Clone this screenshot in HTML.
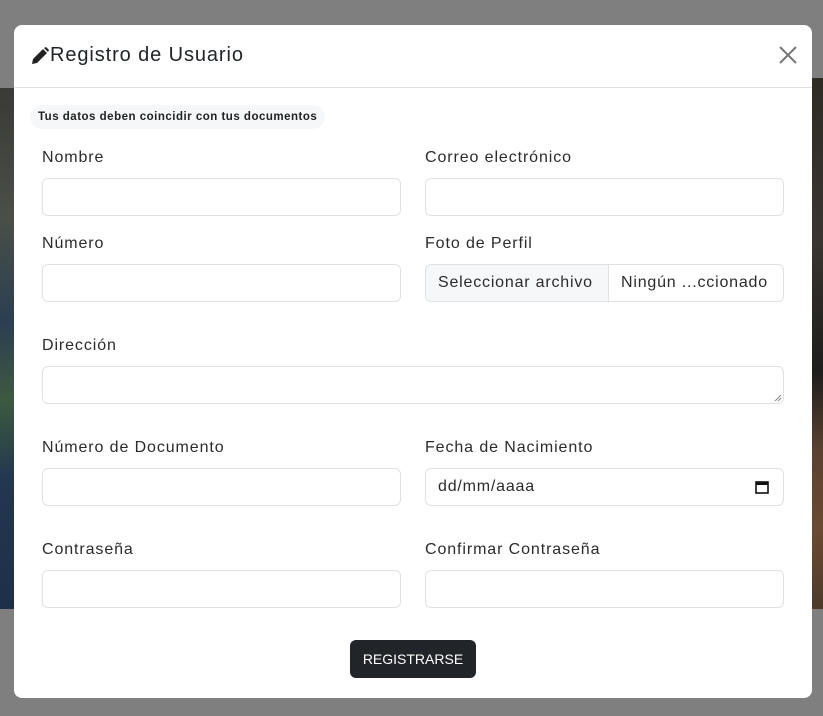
<!DOCTYPE html>
<html><head><meta charset="utf-8"><style>
*{box-sizing:border-box;margin:0;padding:0}
body{width:823px;height:716px;overflow:hidden;position:relative;background:#7f7f7f;font-family:"Liberation Sans",sans-serif;color:#212529}
.bgL{position:absolute;left:0;top:88px;width:30px;height:521px;background:linear-gradient(180deg,#3a3a36 0%,#4a4f48 25%,#2b3f52 45%,#3c5a40 60%,#22384f 75%,#1d3048 100%)}
.bgR{position:absolute;right:0;top:78px;width:30px;height:531px;background:linear-gradient(180deg,#2e2a24 0%,#3a3530 30%,#1e1e1c 55%,#5a4230 70%,#6a4a32 85%,#4e3a2a 100%)}
.modal{position:absolute;left:14px;top:25px;width:798px;height:673px;background:#fff;border-radius:8px}
.hdr{height:63px;border-bottom:1px solid #dee2e6;position:relative}
.title{position:absolute;left:16px;top:19px;font-size:20px;letter-spacing:0.9px;color:#212529;display:flex;align-items:center}
.close{position:absolute;right:15px;top:21px}
.badge{position:absolute;left:16px;top:80px;height:24px;padding:0 8px;border-radius:12px;background:#f6f7f9;font-size:11.5px;letter-spacing:0.5px;font-weight:bold;line-height:24px;color:#222}
.lbl{position:absolute;font-size:16px;letter-spacing:0.9px;color:#2b2b2b}
.inp{position:absolute;height:38px;border:1px solid #dee2e6;border-radius:6px;background:#fff;font-size:16px;letter-spacing:0.8px}
</style></head><body>
<div class="bgL"></div><div class="bgR"></div>
<div class="modal">
<div class="hdr">
<div class="title"><svg width="20" height="20" viewBox="0 0 20 20"><path d="M2 18l1-5 10-10 4 4-10 10z" fill="#222"/><path d="M14 2l2-1 3 3-1 2z" fill="#222"/></svg><span>Registro de Usuario</span></div>
<svg class="close" width="18" height="18" viewBox="0 0 18 18"><path d="M1 1L17 17M17 1L1 17" stroke="#777" stroke-width="2"/></svg>
</div>
<div class="badge">Tus datos deben coincidir con tus documentos</div>
<div class="lbl" style="left:28px;top:124px">Nombre</div>
<div class="lbl" style="left:411px;top:124px">Correo electrónico</div>
<div class="inp" style="left:28px;top:153px;width:359px"></div>
<div class="inp" style="left:411px;top:153px;width:359px"></div>
<div class="lbl" style="left:28px;top:210px">Número</div>
<div class="lbl" style="left:411px;top:210px">Foto de Perfil</div>
<div class="inp" style="left:28px;top:239px;width:359px"></div>
<div class="inp" style="left:411px;top:239px;width:359px;overflow:hidden;display:flex">
<div style="width:183px;background:#f6f7f9;border-right:1px solid #dee2e6;line-height:36px;padding-left:12px;color:#2b2b2b;white-space:nowrap">Seleccionar archivo</div>
<div style="line-height:36px;padding-left:12px;color:#2b2b2b;white-space:nowrap">Ningún ...ccionado</div></div>
<div class="lbl" style="left:28px;top:312px">Dirección</div>
<div class="inp" style="left:28px;top:341px;width:742px"><svg style="position:absolute;right:1px;bottom:1px" width="8" height="8" viewBox="0 0 8 8"><path d="M1 7L7 1M4 7L7 4" stroke="#888" stroke-width="1"/></svg></div>
<div class="lbl" style="left:28px;top:414px">Número de Documento</div>
<div class="lbl" style="left:411px;top:414px">Fecha de Nacimiento</div>
<div class="inp" style="left:28px;top:443px;width:359px"></div>
<div class="inp" style="left:411px;top:443px;width:359px;line-height:36px;padding-left:12px;color:#2b2b2b">dd/mm/aaaa
<svg style="position:absolute;right:14px;top:11px" width="14" height="14" viewBox="0 0 14 14"><rect x="1" y="2" width="12" height="11" fill="none" stroke="#111" stroke-width="1.6"/><rect x="1" y="2" width="12" height="3" fill="#111"/></svg></div>
<div class="lbl" style="left:28px;top:516px">Contraseña</div>
<div class="lbl" style="left:411px;top:516px">Confirmar Contraseña</div>
<div class="inp" style="left:28px;top:545px;width:359px"></div>
<div class="inp" style="left:411px;top:545px;width:359px"></div>
<div style="position:absolute;left:336px;top:615px;width:126px;height:38px;background:#212529;border-radius:6px;color:#fff;font-size:14px;text-align:center;line-height:38px">REGISTRARSE</div>
</div>
</body></html>
